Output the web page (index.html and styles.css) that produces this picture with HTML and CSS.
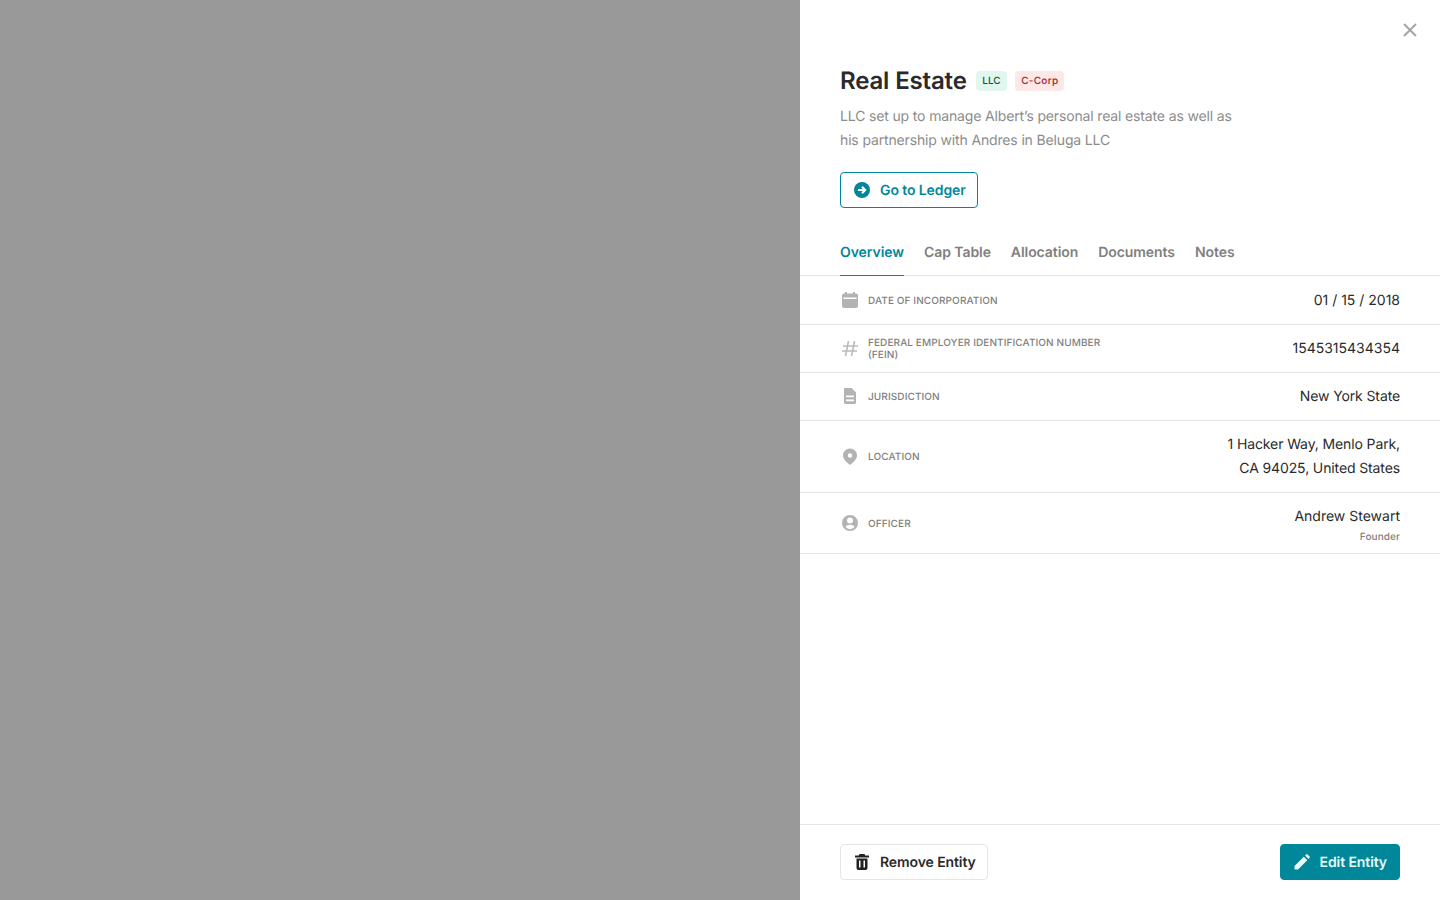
FILE: index.html
```html
<!DOCTYPE html>
<html lang="en">
<head>
    <meta charset="UTF-8">
    <meta name="viewport" content="width=device-width, initial-scale=1.0">
    <title>Real Estate</title>
    <link rel="stylesheet" href="styles.css">
</head>
<body>
    <div class="backdrop"></div>
    <aside class="panel">
        <button class="close" aria-label="Close">
            <svg width="14" height="14" viewBox="0 0 14 14"><path d="M1 1l12 12M13 1L1 13" stroke="#a3a5aa" stroke-width="2" fill="none"/></svg>
        </button>
        <header class="head">
            <div class="title-row">
                <h1>Real Estate</h1>
                <span class="tag tag-green">LLC</span>
                <span class="tag tag-red">C-Corp</span>
            </div>
            <p class="desc">LLC set up to manage Albert’s personal real estate as well as his partnership with Andres in Beluga LLC</p>
            <button class="btn btn-outline">
                <svg width="16" height="16" viewBox="0 0 16 16"><circle cx="8" cy="8" r="8" fill="#00879a"/><path d="M4 8h7M8 4.8L11.2 8 8 11.2" stroke="#fff" stroke-width="2" fill="none"/></svg>
                <span class="btn-text">Go to Ledger</span>
            </button>
        </header>
        <nav class="tabs">
            <a class="tab active">Overview</a>
            <a class="tab">Cap Table</a>
            <a class="tab">Allocation</a>
            <a class="tab">Documents</a>
            <a class="tab">Notes</a>
        </nav>
        <div class="rows">
            <div class="row row-date">
                <div class="row-label">
                    <svg class="row-icon" width="20" height="20" viewBox="0 0 20 20"><path fill="#b3b3b3" d="M5 2h2v1.500h6V2h2v1.500h.5A2 2 0 0 1 18 5.500V16a2 2 0 0 1-2 2H4a2 2 0 0 1-2-2V5.500a2 2 0 0 1 2-2h1zM3.500 7.500v1.500h13V7.500z"/></svg>
                    <span>Date of Incorporation</span>
                </div>
                <div class="row-value">01 / 15 / 2018</div>
            </div>
            <div class="row">
                <div class="row-label">
                    <svg class="row-icon" width="20" height="20" viewBox="0 0 20 20"><path d="M8.500 2L5.500 17M14.500 2l-3 15M3 7h15M2 12h15" stroke="#bbb" stroke-width="1.600" fill="none"/></svg>
                    <span class="wrap">Federal Employer Identification Number (FEIN)</span>
                </div>
                <div class="row-value">1545315434354</div>
            </div>
            <div class="row">
                <div class="row-label">
                    <svg class="row-icon" width="20" height="20" viewBox="0 0 20 20"><path fill="#b3b3b3" fill-rule="evenodd" d="M5 1h6.500L16 5.500V15.500A1.500 1.500 0 0 1 14.500 17h-9A1.500 1.500 0 0 1 4 15.500V2a1 1 0 0 1 1-1zM6 8.500v1.700h8V8.500zM6 12.500v1.700h8v-1.700z"/></svg>
                    <span>Jurisdiction</span>
                </div>
                <div class="row-value row-text">New York State</div>
            </div>
            <div class="row row-tall">
                <div class="row-label">
                    <svg class="row-icon" width="20" height="20" viewBox="0 0 20 20"><path fill="#b3b3b3" fill-rule="evenodd" d="M10 1.500a7 7 0 0 1 7 7c0 4-4 7-7 9.500-3-2.500-7-5.500-7-9.500a7 7 0 0 1 7-7zM10 6.300a2.200 2.200 0 1 0 0 4.400 2.200 2.200 0 0 0 0-4.400z"/></svg>
                    <span>Location</span>
                </div>
                <div class="row-value row-text">1 Hacker Way, Menlo Park,<br>CA 94025, United States</div>
            </div>
            <div class="row row-officer">
                <div class="row-label">
                    <svg class="row-icon" width="20" height="20" viewBox="0 0 20 20"><path fill="#b3b3b3" fill-rule="evenodd" d="M10 2a8 8 0 1 1 0 16 8 8 0 0 1 0-16zM10 4.500a3 3 0 1 0 0 6 3 3 0 0 0 0-6zM10 11.800c-2 0-4.100.8-4.400 2.200a5.600 5.600 0 0 0 8.800 0c-.3-1.400-2.400-2.200-4.400-2.200z"/></svg>
                    <span>Officer</span>
                </div>
                <div class="row-value">
                    Andrew Stewart
                    <div class="row-sub">Founder</div>
                </div>
            </div>
        </div>
        <footer class="foot">
            <button class="btn btn-light">
                <svg width="16" height="16" viewBox="0 0 16 16"><path fill="#222" fill-rule="evenodd" d="M5.500 0h5l.7 1.500H15v2H1v-2h3.800zM2.500 4.500h11V14a2 2 0 0 1-2 2h-7a2 2 0 0 1-2-2zM5 6.500v7h1.500v-7zM9.500 6.500v7H11v-7z"/></svg>
                <span class="btn-text">Remove Entity</span>
            </button>
            <button class="btn btn-primary">
                <svg width="16" height="16" viewBox="0 0 16 16"><path fill="#e6fbfb" d="M0.500 12L9.800 2.700l3.500 3.500L4 15.500H.5zM11 1.500L12.200.4a1 1 0 0 1 1.400 0l2 2a1 1 0 0 1 0 1.400L14.500 5z"/></svg>
                <span class="btn-text">Edit Entity</span>
            </button>
        </footer>
    </aside>
</body>
</html>
```

FILE: styles.css
```css
* {
    box-sizing: border-box;
}
html, body {
    height: 100%;
}
body {
    margin: 0;
    font-family: Inter, "Liberation Sans", sans-serif;
    text-rendering: geometricPrecision;
    background-color: #999;
    color: #222;
    display: flex;
    overflow: hidden;
}
.backdrop {
    flex: 1;
}
.panel {
    position: relative;
    width: 640px;
    height: 900px;
    background-color: #fff;
    display: flex;
    flex-direction: column;
}
button {
    font-family: inherit;
    text-rendering: inherit;
    cursor: pointer;
}
.close {
    position: absolute;
    top: 23px;
    right: 23px;
    width: 14px;
    height: 14px;
    padding: 0;
    background: none;
    border: none;
    display: flex;
}
.head {
    padding: 65px 40px 0;
}
.title-row {
    display: flex;
    align-items: center;
    height: 32px;
}
h1 {
    margin: 0 9px 0 0;
    font-size: 24px;
    line-height: 32px;
    font-weight: 600;
    letter-spacing: -.15px;
    color: #2a2a2a;
}
.tag {
    height: 20px;
    padding: 0 6px;
    margin-right: 8px;
    border-radius: 4px;
    font-size: 10px;
    line-height: 20px;
    font-weight: 500;
}
.tag-green {
    padding: 0 6.5px;
    background-color: #e1f6ee;
    color: #0b5d3d;
}
.tag-red {
    background-color: #fde7e7;
    color: #a61e26;
    letter-spacing: .3px;
}
.desc {
    width: 400px;
    margin: 8px 0 19px;
    font-size: 14px;
    line-height: 24px;
    letter-spacing: -.15px;
    color: #8c8c8c;
}
.btn {
    height: 36px;
    padding: 0 11px 0 13px;
    display: inline-flex;
    align-items: center;
    gap: 10px;
    border-radius: 4px;
    font-size: 14px;
    line-height: 16px;
    font-weight: 600;
    letter-spacing: -.1px;
}
.btn-text {
    padding-top: 2px;
}
.btn-outline {
    background-color: #fff;
    border: 1px solid #00879a;
    color: #00879a;
}
.btn-light {
    background-color: #fff;
    border: 1px solid #e6e6e6;
    color: #2a2a2a;
}
.btn-primary {
    padding-right: 12px;
    background-color: #00879a;
    border: 1px solid #00879a;
    color: #e6fbfb;
}
.tabs {
    margin-top: 24px;
    padding: 0 40px;
    height: 44px;
    display: flex;
    gap: 20px;
    border-bottom: 1px solid #e6e6e6;
}
.tab {
    height: 44px;
    font-size: 14px;
    line-height: 42px;
    font-weight: 600;
    letter-spacing: -.07px;
    color: #808080;
}
.tab.active {
    color: #00879a;
    border-bottom: 1px solid #00879a;
}
.rows {
    flex: 1;
}
.row {
    height: 48px;
    padding: 0 40px;
    display: flex;
    align-items: center;
    justify-content: space-between;
    border-bottom: 1px solid #e6e6e6;
}
.row-date {
    height: 49px;
}
.row-tall {
    height: 72px;
}
.row-officer {
    height: 61px;
}
.row-label {
    display: flex;
    align-items: center;
    gap: 8px;
    font-size: 10px;
    line-height: 12px;
    font-weight: 500;
    letter-spacing: .1px;
    text-transform: uppercase;
    color: #808080;
}
.row-date span,
.row-date .row-value,
.row-officer span {
    padding-top: 2px;
}
.row-officer .row-value {
    padding-top: 4px;
}
.row-icon {
    flex-shrink: 0;
}
.wrap {
    width: 240px;
}
.row-value {
    font-size: 14px;
    line-height: 24px;
    text-align: right;
    color: #2a2a2a;
}
.row-text {
    letter-spacing: -.12px;
}
.row-sub {
    font-size: 10px;
    line-height: 16px;
    font-weight: 500;
    letter-spacing: .1px;
    color: #808080;
}
.foot {
    height: 76px;
    padding: 19px 40px 0;
    display: flex;
    align-items: flex-start;
    justify-content: space-between;
    border-top: 1px solid #e6e6e6;
}
```
